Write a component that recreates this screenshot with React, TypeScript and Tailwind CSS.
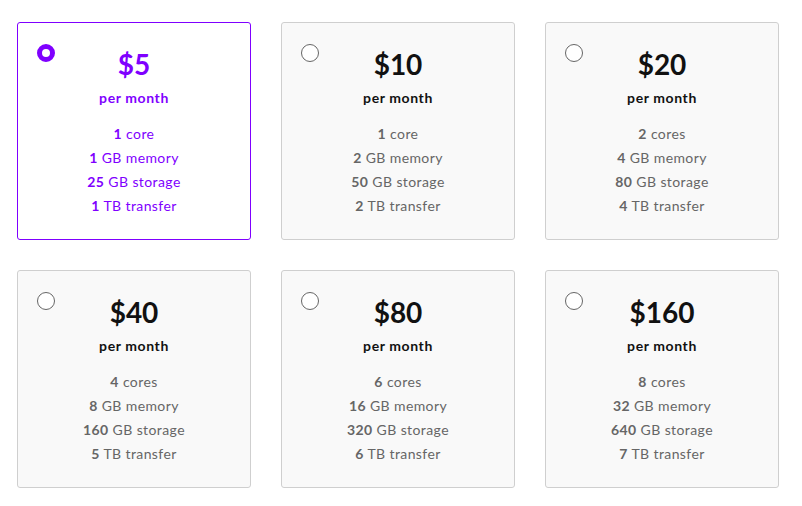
import { useState } from "react";

// Plan picker — six fixed tiers, one selected at a time.

type Plan = {
  price: number;
  cores: number;
  memory: number;
  storage: number;
  transfer: number;
};

const plans: Plan[] = [
  { price: 5, cores: 1, memory: 1, storage: 25, transfer: 1 },
  { price: 10, cores: 1, memory: 2, storage: 50, transfer: 2 },
  { price: 20, cores: 2, memory: 4, storage: 80, transfer: 4 },
  { price: 40, cores: 4, memory: 8, storage: 160, transfer: 5 },
  { price: 80, cores: 6, memory: 16, storage: 320, transfer: 6 },
  { price: 160, cores: 8, memory: 32, storage: 640, transfer: 7 },
];

export default function App() {
  const [selected, setSelected] = useState(5);

  return (
    <div
      className="bg-white min-h-[506px] pl-[17px] pt-[22px]"
      style={{ fontFamily: "Lato, 'Noto Sans', sans-serif" }}
    >
      <div className="grid grid-cols-[repeat(3,234px)] gap-[30px]" role="radiogroup">
        {plans.map((p) => (
          <PlanCard
            key={p.price}
            plan={p}
            active={selected === p.price}
            onSelect={() => setSelected(p.price)}
          />
        ))}
      </div>
    </div>
  );
}

function PlanCard({
  plan,
  active,
  onSelect,
}: {
  plan: Plan;
  active: boolean;
  onSelect: () => void;
}) {
  const specs: [number, string][] = [
    [plan.cores, plan.cores === 1 ? "core" : "cores"],
    [plan.memory, "GB memory"],
    [plan.storage, "GB storage"],
    [plan.transfer, "TB transfer"],
  ];

  return (
    <div
      role="radio"
      aria-checked={active}
      onClick={onSelect}
      className={
        "relative h-[218px] cursor-pointer rounded-[3px] border text-center pt-[23px] " +
        (active
          ? "border-[#7f00ff] bg-white text-[#7f00ff]"
          : "border-[#cfcfcf] bg-[#f9f9f9] text-[#111]")
      }
    >
      <span
        className={
          "absolute left-[19px] top-[21px] h-[18px] w-[18px] rounded-full " +
          (active
            ? "border-[5px] border-[#7f00ff] bg-white"
            : "border border-[#666] bg-white")
        }
      />
      <div className="text-[28px] leading-[36px] font-bold">${plan.price}</div>
      <div className="mt-[6px] text-[14px] leading-[20px] font-bold tracking-[0.6px]">
        per month
      </div>
      <ul
        className={
          "mt-[14px] text-[14px] leading-[24px] tracking-[0.4px] " +
          (active ? "text-[#7f00ff]" : "text-[#666]")
        }
      >
        {specs.map(([n, label]) => (
          <li key={label}>
            <span className="font-bold">{n}</span> {label}
          </li>
        ))}
      </ul>
    </div>
  );
}
